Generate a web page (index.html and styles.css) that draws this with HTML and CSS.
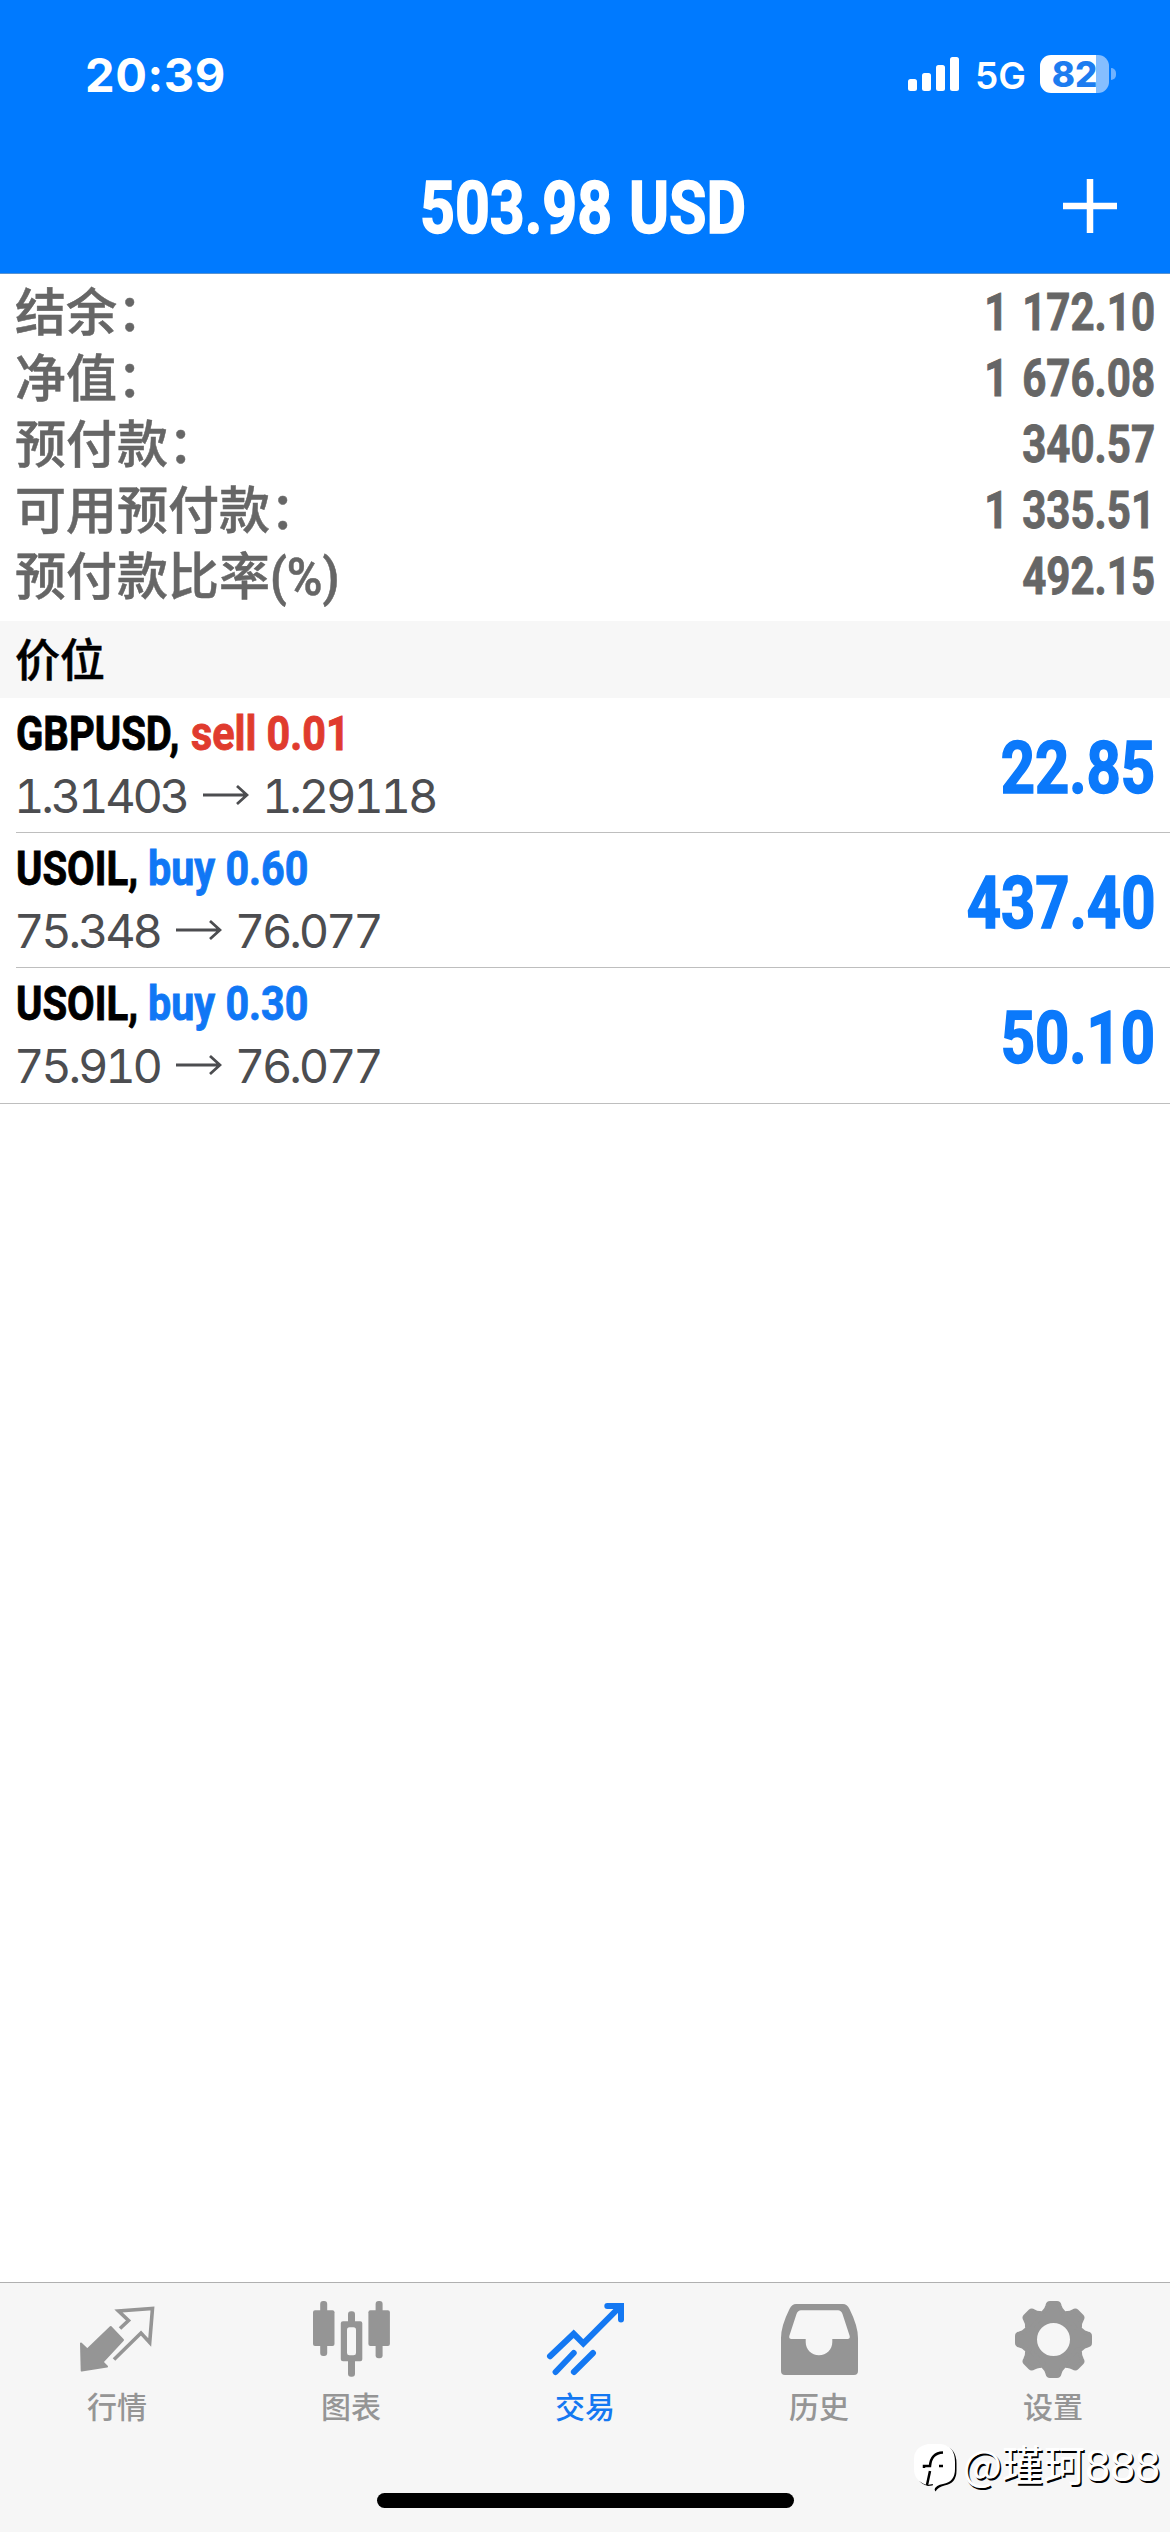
FILE: index.html
```html
<!DOCTYPE html>
<html lang="zh-CN">
<head>
<meta charset="utf-8">
<title>交易</title>
<link rel="stylesheet" href="styles.css">
</head>
<body>
<div class="app">
  <header class="header">
    <div class="status">
      <span class="clock">20:39</span>
      <div class="status-right">
        <svg class="signal" width="51" height="34" viewBox="0 0 51 34">
          <rect x="0" y="22" width="9" height="12" rx="2.5"/>
          <rect x="14" y="16" width="9" height="18" rx="2.5"/>
          <rect x="28" y="8" width="9" height="26" rx="2.5"/>
          <rect x="42" y="0" width="9" height="34" rx="2.5"/>
        </svg>
        <span class="network">5G</span>
        <div class="battery"><span class="battery-level">82</span></div>
        <span class="battery-nub"></span>
      </div>
    </div>
    <div class="nav">
      <h1 class="title"><span class="cond title-num">503.98</span><span class="cond title-cur">USD</span></h1>
      <svg class="plus" width="54" height="54" viewBox="0 0 54 54"><path d="M27 0V54M0 27H54"/></svg>
    </div>
  </header>

  <section class="summary">
    <div class="line"><span>结余：</span><span class="cond value">1 172.10</span></div>
    <div class="line"><span>净值：</span><span class="cond value">1 676.08</span></div>
    <div class="line"><span>预付款：</span><span class="cond value">340.57</span></div>
    <div class="line"><span>可用预付款：</span><span class="cond value">1 335.51</span></div>
    <div class="line"><span>预付款比率<span class="cond percent">(%)</span></span><span class="cond value">492.15</span></div>
  </section>

  <h2 class="section">价位</h2>

  <main class="positions">
    <article class="position">
      <div>
        <div class="deal"><span class="cond symbol symbol-wide">GBPUSD,</span><span class="cond side sell">sell 0.01</span></div>
        <div class="prices">1.31403<svg class="arrow" width="46" height="22" viewBox="0 0 46 22"><path d="M0 11H44M34 2L44 11L34 20"/></svg>1.29118</div>
      </div>
      <span class="cond profit">22.85</span>
    </article>
    <article class="position">
      <div>
        <div class="deal"><span class="cond symbol">USOIL,</span><span class="cond side buy">buy 0.60</span></div>
        <div class="prices">75.348<svg class="arrow" width="46" height="22" viewBox="0 0 46 22"><path d="M0 11H44M34 2L44 11L34 20"/></svg>76.077</div>
      </div>
      <span class="cond profit">437.40</span>
    </article>
    <article class="position last">
      <div>
        <div class="deal"><span class="cond symbol">USOIL,</span><span class="cond side buy">buy 0.30</span></div>
        <div class="prices">75.910<svg class="arrow" width="46" height="22" viewBox="0 0 46 22"><path d="M0 11H44M34 2L44 11L34 20"/></svg>76.077</div>
      </div>
      <span class="cond profit">50.10</span>
    </article>
  </main>

  <footer class="footer">
    <nav class="tabs">
      <a class="tab">
        <svg width="78" height="78" viewBox="0 0 78 78">
          <path class="solid" stroke-width="2" d="M3 43.5L9.3 49.5L32.7 27L45 40L24.5 62L29 66.5L3.7 70.5Z"/>
          <path class="stroke" stroke-width="3.6" d="M42 28.5L50.5 20.5L40.5 11L74.5 8.5L71.7 42.5L63 33L36 59.5"/>
        </svg>
        行情
      </a>
      <a class="tab">
        <svg width="78" height="78" viewBox="0 0 78 78" fill="currentColor">
          <rect x="1" y="10.3" width="21.5" height="35.7" rx="2"/><rect x="8.2" y="1" width="7" height="55" rx="3"/>
          <rect x="56.4" y="10.3" width="21.5" height="35.7" rx="2"/><rect x="63.6" y="1" width="7" height="57.3" rx="3"/>
          <rect x="36" y="11.3" width="7" height="14" rx="3"/><rect x="36" y="57" width="7" height="19.7" rx="3"/>
          <path fill-rule="evenodd" d="M31 21.3H48.3Q50.3 21.3 50.3 23.3V59.3Q50.3 61.3 48.3 61.3H31Q28.8 61.3 28.8 59.3V23.3Q28.8 21.3 31 21.3ZM37.5 27.3Q35 27.3 35 30V53Q35 55.3 37.5 55.3H41.5Q44 55.3 44 53V30Q44 27.3 41.5 27.3Z"/>
        </svg>
        图表
      </a>
      <a class="tab active">
        <svg width="78" height="78" viewBox="0 0 78 78">
          <path class="stroke" stroke-width="6" stroke-linecap="round" d="M4 56.3L27.7 33.8L37.3 43.4L74.5 6.2M61.3 6H75V19.5M27.7 53L9.6 72M47 53L27.9 72"/>
        </svg>
        交易
      </a>
      <a class="tab">
        <svg width="78" height="78" viewBox="0 0 78 78" fill="currentColor">
          <path fill-rule="evenodd" d="M16 4H63Q67 4 69.500 9Q78 26 78 38V71Q78 75 74 75H5Q1 75 1 71V38Q1 26 9.500 9Q12 4 16 4ZM21 10.300Q18 10.300 16.500 14L9.300 36Q8.700 39 11.500 39H25.700V42C25.700 49.500 31.500 55.300 39 55.300S52.300 49.500 52.300 42V39H67.500Q70.300 39 69.700 36L62.500 14Q61 10.300 58 10.300Z"/>
        </svg>
        历史
      </a>
      <a class="tab">
        <svg width="78" height="78" viewBox="-39.500 -39.500 78 78">
          <defs><path id="tooth" class="solid" stroke-width="4" d="M-10 -24L-9.500 -28Q-7 -30 -6 -34Q-5.500 -36.500 -3.500 -36.500H3.500Q5.500 -36.500 6 -34Q7 -30 9.500 -28L10 -24Z"/></defs>
          <circle class="stroke" r="23.500" stroke-width="14"/>
          <use href="#tooth"/><use href="#tooth" transform="rotate(45)"/><use href="#tooth" transform="rotate(90)"/><use href="#tooth" transform="rotate(135)"/>
          <use href="#tooth" transform="rotate(180)"/><use href="#tooth" transform="rotate(225)"/><use href="#tooth" transform="rotate(270)"/><use href="#tooth" transform="rotate(315)"/>
        </svg>
        设置
      </a>
    </nav>
    <div class="home-bar"></div>
    <div class="watermark">
      <svg width="44" height="48" viewBox="0 0 44 48">
        <path fill="#000" d="M15.500 1.500H28.500Q42.500 3.500 42.500 19.500V26.500Q42.500 39.500 30.500 41.500Q24 43 21.500 47.500Q19 44 22 41L14 42Q6 40 4 34V17Z"/>
        <path fill="#fff" d="M14 0H27Q41 2 41 18V25Q41 38 29 40Q22 41 20 46Q18 42 19 40L13 41Q0 37 0 25V15Q0 3 14 0Z"/>
        <path fill="none" stroke="#000" stroke-width="2.500" d="M10 24V22H16Q17 9 29 8.500M16 27L13 41M25 22H29"/>
      </svg>
      <span class="handle">@瑾珂<span class="handle-num">888</span></span>
    </div>
  </footer>
</div>
</body>
</html>
```
FILE: styles.css
```css
* { box-sizing: border-box; }

body {
  margin: 0;
  background: #fff;
  font-family: Inter, "Noto Sans CJK SC", sans-serif;
}

.app {
  width: 1170px;
  height: 2532px;
  display: flex;
  flex-direction: column;
  overflow: hidden;
}

/* Condensed bold face used for amounts and symbols */
.cond {
  display: inline-block;
  font-family: Roboto, "Liberation Sans", sans-serif;
  font-weight: 700;
  white-space: nowrap;
  transform-origin: left center;
  -webkit-text-stroke: 0.9px currentColor;
}

.header {
  height: 274px;
  background: #007aff;
  border-bottom: 1px solid #5a93d0;
  color: #fff;
}

.status {
  height: 148px;
  padding: 0 54px 0 85px;
  display: flex;
  align-items: center;
  justify-content: space-between;
}

.clock {
  font-size: 47px;
  font-weight: 700;
  letter-spacing: 0.6px;
}

.status-right { display: flex; align-items: center; }
.signal { fill: #fff; }

.network {
  width: 65px;
  margin-left: 16px;
  font-size: 37px;
  font-weight: 600;
  line-height: 38px;
  padding-top: 3px;
}

.battery {
  width: 69px;
  height: 38px;
  border-radius: 11px;
  background: linear-gradient(90deg, #fff 56px, #85beff 56px);
  text-align: center;
}

.battery-level {
  display: block;
  font-size: 35px;
  font-weight: 800;
  line-height: 38px;
  color: #1c7cf0;
}

.battery-nub {
  width: 5px;
  height: 12px;
  margin-left: 2px;
  border-radius: 0 6px 6px 0;
  background: #70b2ff;
}

.nav {
  height: 116px;
  padding: 0 53px 0 420px;
  display: flex;
  align-items: center;
  justify-content: space-between;
}

.title {
  margin: 5px 0 0;
  display: flex;
  font-size: 72px;
  line-height: 80px;
}

.title-num { width: 209px; transform: scaleX(0.845); }
.title-cur { width: 120px; transform: scaleX(0.845); }
.cond.title-num, .cond.title-cur, .cond.profit { -webkit-text-stroke-width: 1.6px; }
.plus { fill: none; stroke: #fff; stroke-width: 6.5; }

.summary {
  height: 347px;
  padding: 6px 15px 0 15px;
  color: #666;
  font-size: 51px;
  font-weight: 500;
  -webkit-text-stroke: 0.5px currentColor;
}

.line {
  height: 66px;
  line-height: 66px;
  display: flex;
  justify-content: space-between;
}

.value {
  word-spacing: 4px;
  transform-origin: right center;
  transform: scaleX(0.825);
}

.percent { transform: scaleX(0.95); }
.cond.percent { font-weight: 600; -webkit-text-stroke-width: 0.5px; }

.section {
  margin: 0;
  height: 77px;
  padding: 1px 0 0 15px;
  background: #f7f7f7;
  color: #000;
  font-size: 45px;
  font-weight: 500;
  line-height: 77px;
  -webkit-text-stroke: 0.5px currentColor;
}

.position {
  height: 135px;
  margin-left: 16px;
  padding-right: 15px;
  border-bottom: 1px solid #bebebe;
  display: flex;
  justify-content: space-between;
}

.position.last {
  height: 136px;
  margin-left: 0;
  padding-left: 16px;
}

.deal {
  display: flex;
  height: 60px;
  padding-top: 6px;
  font-size: 48px;
  line-height: 60px;
}

.symbol { width: 132px; color: #000; transform: scaleX(0.835); }
.symbol-wide { width: 175px; }
.side { transform: scaleX(0.86); }
.sell { color: #e03b2e; }
.buy { color: #1077f5; }

.prices {
  height: 68px;
  margin-left: -2px;
  padding-top: 6px;
  display: flex;
  align-items: center;
  color: #4c4d50;
  font-size: 47px;
  font-variant-numeric: tabular-nums;
  letter-spacing: -3.2px;
}

.arrow { margin: 0 13px 0 16px; fill: none; stroke: #4c4d50; stroke-width: 2.8; }

.profit {
  color: #0b79fb;
  font-size: 72px;
  line-height: 142px;
  transform-origin: right center;
  transform: scaleX(0.83);
}

.footer {
  position: relative;
  height: 250px;
  margin-top: auto;
  border-top: 1px solid #b0b0b0;
  background: #f6f6f6;
}

.tabs {
  height: 210px;
  padding-top: 17px;
  display: grid;
  grid-template-columns: repeat(5, 1fr);
}

.tab {
  display: flex;
  flex-direction: column;
  align-items: center;
  gap: 7px;
  color: #959595;
  font-size: 30px;
  font-weight: 500;
  line-height: 44px;
}

.tab.active { color: #1478f2; }
.solid { fill: currentColor; stroke: currentColor; stroke-linejoin: round; }
.stroke { fill: none; stroke: currentColor; }

.home-bar {
  width: 417px;
  height: 15px;
  margin: 0 auto;
  border-radius: 8px;
  background: #000;
}

.watermark {
  position: absolute;
  right: 10px;
  bottom: 40px;
  display: flex;
  align-items: center;
  gap: 5px;
}

.watermark svg { margin-top: 6px; }

.handle {
  font-family: "Noto Sans CJK SC", sans-serif;
  font-size: 41.5px;
  font-weight: 400;
  line-height: 52px;
  color: #fff;
  text-shadow: 1.5px 1.5px 0 #000;
}

.handle-num {
  font-family: "Liberation Sans", sans-serif;
  font-size: 45px;
}
```
